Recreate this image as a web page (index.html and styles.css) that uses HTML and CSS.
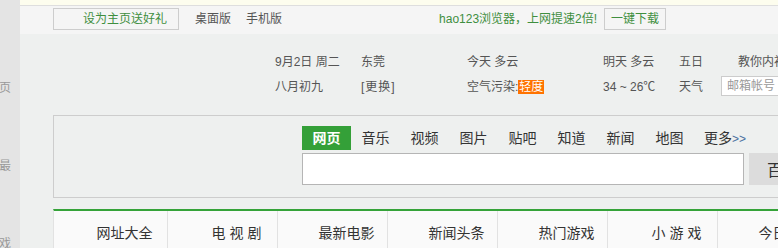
FILE: index.html
```html
<!DOCTYPE html>
<html lang="zh-CN">
<head>
    <meta charset="UTF-8">
    <meta name="viewport" content="width=device-width, initial-scale=1.0">
    <title>hao123</title>
    <link rel="stylesheet" href="styles.css">
</head>
<body>
    <div class="page">
        <!-- левая полоска -->
        <div class="side">
            <span class="side-item">页</span>
            <span class="side-item">最</span>
            <span class="side-item">戏</span>
        </div>

        <div class="main">
            <div class="notice"></div>

            <div class="topbar">
                <a class="home-btn">设为主页送好礼</a>
                <a class="top-link first">桌面版</a>
                <a class="top-link">手机版</a>
                <span class="promo">hao123浏览器，上网提速2倍!</span>
                <a class="down-btn">一键下载</a>
            </div>

            <div class="info">
                <div class="info-row">
                    <span class="c1">9月2日 周二</span>
                    <span class="c2">东莞</span>
                    <span class="c3">今天 多云</span>
                    <span class="c4">明天 多云</span>
                    <span class="c5">五日</span>
                    <span class="c6 tip">教你内衬</span>
                </div>
                <div class="info-row">
                    <span class="c1">八月初九</span>
                    <span class="c2 change">[更换]</span>
                    <span class="c3">空气污染:<em class="level">轻度</em></span>
                    <span class="c4">34 ~ 26℃</span>
                    <span class="c5">天气</span>
                    <span class="c6"><input class="mail" type="text" placeholder="邮箱帐号"></span>
                </div>
            </div>

            <div class="search">
                <div class="tabs">
                    <span class="tab active">网页</span>
                    <span class="tab">音乐</span>
                    <span class="tab">视频</span>
                    <span class="tab">图片</span>
                    <span class="tab">贴吧</span>
                    <span class="tab">知道</span>
                    <span class="tab">新闻</span>
                    <span class="tab">地图</span>
                    <span class="tab more">更多<small>&gt;&gt;</small></span>
                </div>
                <div class="search-row">
                    <input class="query" type="text">
                    <button class="search-btn" type="button">百度一下</button>
                </div>
            </div>

            <div class="nav">
                <a class="nav-item first">网址大全</a>
                <a class="nav-item">电 视 剧</a>
                <a class="nav-item">最新电影</a>
                <a class="nav-item">新闻头条</a>
                <a class="nav-item">热门游戏</a>
                <a class="nav-item">小 游 戏</a>
                <a class="nav-item">今日特价</a>
            </div>
        </div>
    </div>
</body>
</html>
```

FILE: styles.css
```css
html, body {
    margin: 0;
    padding: 0;
    overflow: hidden;
}

body {
    background-color: #eef0ef;
    font-family: "Liberation Sans", "Noto Sans CJK SC", sans-serif;
    font-size: 12px;
    color: #555;
}

a {
    text-decoration: none;
}

.page {
    display: flex;
    width: 1100px;
    height: 248px;
}

/* левая полоска */
.side {
    width: 20px;
    flex-shrink: 0;
    background-color: #e4e4e4;
    overflow: hidden;
    display: flex;
    flex-direction: column;
    padding-top: 76px;
    box-sizing: border-box;
}

.side-item {
    flex-shrink: 0;
    height: 78px;
    line-height: 24px;
    color: #999;
    font-size: 12px;
    margin-left: -1px;
}

.main {
    flex: 1;
}

.notice {
    height: 5px;
    background-color: #fdfdee;
    border-bottom: 1px solid #dedede;
}

/* верхняя панель */
.topbar {
    height: 28px;
    background-color: #f5f5f5;
    display: flex;
    align-items: flex-start;
    padding: 2px 0 0 33px;
    box-sizing: border-box;
}

.home-btn {
    width: 126px;
    height: 22px;
    box-sizing: border-box;
    border: 1px solid #cdcdcd;
    padding-left: 29px;
    line-height: 20px;
    color: #3f8f3f;
}

.top-link {
    margin-left: 15px;
    line-height: 22px;
    color: #555;
}

.top-link.first {
    margin-left: 16px;
}

.promo {
    margin-left: 157px;
    line-height: 22px;
    color: #3f8f3f;
}

.down-btn {
    margin-left: 7px;
    height: 22px;
    box-sizing: border-box;
    border: 1px solid #cdcdcd;
    padding: 0 6px;
    line-height: 20px;
    color: #3f8f3f;
}

/* погода */
.info {
    height: 81px;
    padding: 14px 0 0 255px;
    box-sizing: border-box;
}

.info-row {
    display: flex;
    height: 25px;
    align-items: center;
}

.c1 { width: 86px; }
.c2 { width: 106px; }
.c3 { width: 136px; }
.c4 { width: 76px; }
.c5 { width: 42px; }
.c6 { width: 120px; }

.change {
    letter-spacing: 1px;
}

.tip {
    padding-left: 17px;
}

.level {
    font-style: normal;
    background-color: #ff7300;
    color: #fff;
    padding: 0 1px;
    line-height: 14px;
    display: inline-block;
}

.mail {
    width: 100px;
    height: 20px;
    box-sizing: border-box;
    border: 1px solid #ccc;
    padding: 0 5px;
    font-family: inherit;
    font-size: 12px;
    outline: none;
}

.mail::placeholder {
    color: #999;
}

/* поиск */
.search {
    margin-left: 33px;
    border: 1px solid #cdcdcd;
    padding: 10px 0 12px 248px;
}

.tabs {
    display: flex;
    height: 24px;
}

.tab {
    width: 49px;
    text-align: center;
    line-height: 24px;
    font-size: 14px;
    color: #333;
}

.tab.active {
    background-color: #34a038;
    color: #fff;
    font-weight: bold;
}

.tab.more {
    width: 60px;
    text-align: left;
    padding-left: 10px;
}

.tab.more small {
    font-size: 12px;
    color: #4a6fa0;
}

.search-row {
    display: flex;
    margin-top: 3px;
}

.query {
    width: 442px;
    height: 32px;
    box-sizing: border-box;
    border: 1px solid #b5b5b5;
    background-color: #fff;
    outline: none;
}

.search-btn {
    margin-left: 5px;
    width: 96px;
    height: 32px;
    border: none;
    background-color: #dcdcdc;
    font-family: inherit;
    font-size: 16px;
    color: #333;
    text-align: left;
    padding-left: 18px;
}

/* навигация */
.nav {
    margin: 11px 0 0 33px;
    border-top: 2px solid #35a339;
    border-left: 1px solid #e2e2e2;
    display: flex;
    background-color: #fafafa;
    height: 44px;
}

.nav-item {
    width: 110px;
    box-sizing: border-box;
    border-right: 1px solid #e2e2e2;
    padding-left: 28px;
    text-align: center;
    line-height: 44px;
    font-size: 14px;
    color: #333;
    white-space: nowrap;
}

.nav-item.first {
    width: 114px;
}
```
